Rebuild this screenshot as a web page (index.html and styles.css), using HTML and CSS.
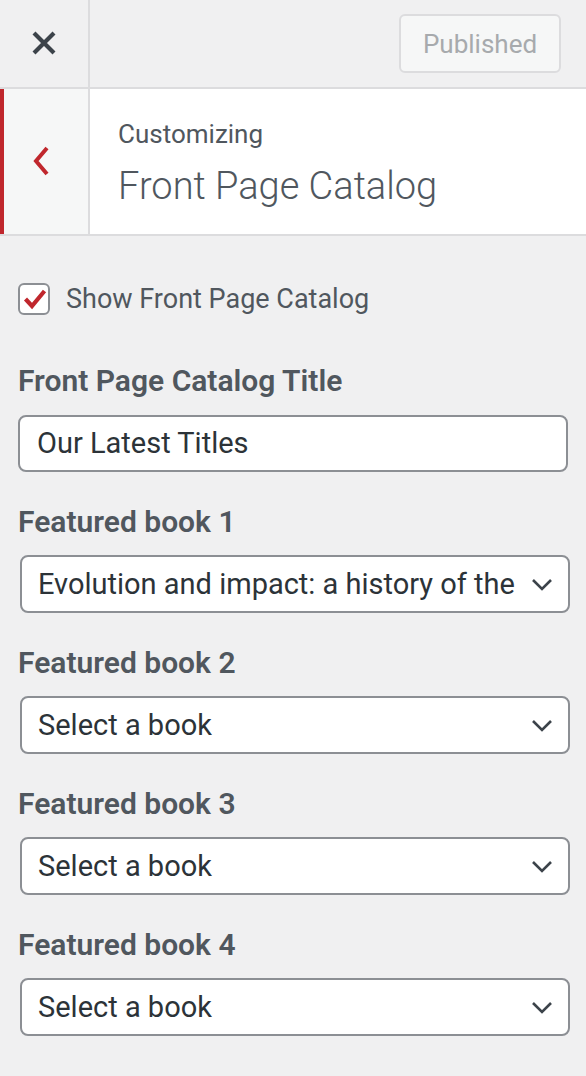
FILE: index.html
```html
<!DOCTYPE html>
<html lang="en">
<head>
<meta charset="utf-8">
<title>Customizing Front Page Catalog</title>
<link rel="stylesheet" href="styles.css">
</head>
<body>
  <header class="topbar">
    <button class="close" aria-label="Close">
      <svg width="26" height="26" viewBox="0 0 26 26"><path d="M3 3 L23 23 M23 3 L3 23" stroke="#3c434a" stroke-width="4.2" stroke-linecap="butt" fill="none"/></svg>
    </button>
    <button class="publish" disabled>Published</button>
  </header>

  <section class="info">
    <button class="back" aria-label="Back">
      <svg width="18" height="30" viewBox="0 0 18 30"><path d="M15 2 L4 15 L15 28" stroke="#c0272d" stroke-width="4" fill="none"/></svg>
    </button>
    <div class="info-text">
      <span class="notice">Customizing</span>
      <h1 class="panel-title">Front Page Catalog</h1>
    </div>
  </section>

  <main class="controls">
    <label class="check-row">
      <span class="checkbox">
        <svg width="24" height="22" viewBox="0 0 24 22"><path d="M2.5 11 L9 18 L21.5 3" stroke="#c0272d" stroke-width="4.2" fill="none" stroke-linejoin="miter"/></svg>
      </span>
      <span class="check-label">Show Front Page Catalog</span>
    </label>

    <div class="control first">
      <label class="control-title text-title" for="cat-title">Front Page Catalog Title</label>
      <input class="text-input" id="cat-title" type="text" value="Our Latest Titles">
    </div>

    <div class="control">
      <label class="control-title" for="b1">Featured book 1</label>
      <div class="select-wrap">
        <select class="select" id="b1"><option>Evolution and impact: a history of the Internet</option></select>
        <svg class="chev" width="22" height="14" viewBox="0 0 22 14"><path d="M2 2 L11 11 L20 2" stroke="#3c434a" stroke-width="2.6" fill="none"/></svg>
      </div>
    </div>

    <div class="control">
      <label class="control-title" for="b2">Featured book 2</label>
      <div class="select-wrap">
        <select class="select" id="b2"><option>Select a book</option></select>
        <svg class="chev" width="22" height="14" viewBox="0 0 22 14"><path d="M2 2 L11 11 L20 2" stroke="#3c434a" stroke-width="2.6" fill="none"/></svg>
      </div>
    </div>

    <div class="control">
      <label class="control-title" for="b3">Featured book 3</label>
      <div class="select-wrap">
        <select class="select" id="b3"><option>Select a book</option></select>
        <svg class="chev" width="22" height="14" viewBox="0 0 22 14"><path d="M2 2 L11 11 L20 2" stroke="#3c434a" stroke-width="2.6" fill="none"/></svg>
      </div>
    </div>

    <div class="control">
      <label class="control-title" for="b4">Featured book 4</label>
      <div class="select-wrap">
        <select class="select" id="b4"><option>Select a book</option></select>
        <svg class="chev" width="22" height="14" viewBox="0 0 22 14"><path d="M2 2 L11 11 L20 2" stroke="#3c434a" stroke-width="2.6" fill="none"/></svg>
      </div>
    </div>
  </main>
</body>
</html>
```

FILE: styles.css
```css
* { box-sizing: border-box; }

html, body {
  margin: 0;
  padding: 0;
  background: #f0f0f1;
  font-family: Roboto, "Liberation Sans", sans-serif;
  color: #50575e;
}

button { font-family: inherit; }

.topbar {
  display: flex;
  align-items: center;
  height: 89px;
  border-bottom: 2px solid #dcdcde;
  background: #f0f0f1;
}

.close {
  width: 90px;
  height: 100%;
  display: flex;
  align-items: center;
  justify-content: center;
  padding: 0 0 2px 0;
  border: 0;
  border-right: 2px solid #dcdcde;
  background: transparent;
}

.publish {
  margin-left: auto;
  margin-right: 25px;
  width: 162px;
  height: 59px;
  border: 2px solid #dcdcde;
  border-radius: 6px;
  background: #f6f7f7;
  color: #a7aaad;
  font-size: 26px;
  padding: 0;
}

.info {
  display: flex;
  height: 147px;
  background: #fff;
  border-bottom: 2px solid #dcdcde;
}

.back {
  width: 90px;
  flex: none;
  display: flex;
  align-items: center;
  justify-content: center;
  padding: 0 10px 2px 0;
  border: 0;
  border-left: 4px solid #c0272d;
  border-right: 2px solid #dcdcde;
  background: #f6f7f7;
}

.info-text {
  display: flex;
  flex-direction: column;
  padding: 28px 0 0 28px;
}

.notice {
  font-size: 26px;
  line-height: 34px;
  color: #50575e;
}

.panel-title {
  margin: 12px 0 0 0;
  font-size: 38px;
  line-height: 46px;
  font-weight: 300;
  color: #50575e;
}

.controls {
  display: flex;
  flex-direction: column;
  padding: 47px 18px 0 18px;
}

.check-row {
  display: flex;
  align-items: center;
  gap: 16px;
  height: 32px;
}

.checkbox {
  width: 32px;
  height: 32px;
  border: 2px solid #8c8f94;
  border-radius: 6px;
  background: #fff;
  display: flex;
  align-items: center;
  justify-content: center;
  padding: 0 0 1px 1px;
}

.check-label {
  font-size: 27px;
  line-height: 34px;
  color: #50575e;
}

.control {
  display: flex;
  flex-direction: column;
  margin-top: 33px;
}

.control.first {
  margin-top: 49px;
}

.control-title {
  font-size: 30px;
  line-height: 34px;
  font-weight: 600;
  color: #50575e;
  margin-bottom: 16px;
}

.control-title.text-title {
  margin-bottom: 17px;
}

.text-input {
  width: 550px;
  height: 57px;
  border: 2px solid #8c8f94;
  border-radius: 8px;
  background: #fff;
  padding: 0 16px 1px 17px;
  font-family: Roboto, "Liberation Sans", sans-serif;
  font-size: 29px;
  color: #2c3338;
  outline: none;
}

.select-wrap {
  position: relative;
  margin-left: 2px;
  width: 550px;
}

.select {
  appearance: none;
  -webkit-appearance: none;
  display: block;
  width: 550px;
  height: 58px;
  border: 2px solid #8c8f94;
  border-radius: 8px;
  background: #fff;
  padding: 0 50px 1px 16px;
  font-family: Roboto, "Liberation Sans", sans-serif;
  font-size: 29px;
  color: #2c3338;
  outline: none;
}

.chev {
  position: absolute;
  right: 17px;
  top: 23px;
  pointer-events: none;
}
```
